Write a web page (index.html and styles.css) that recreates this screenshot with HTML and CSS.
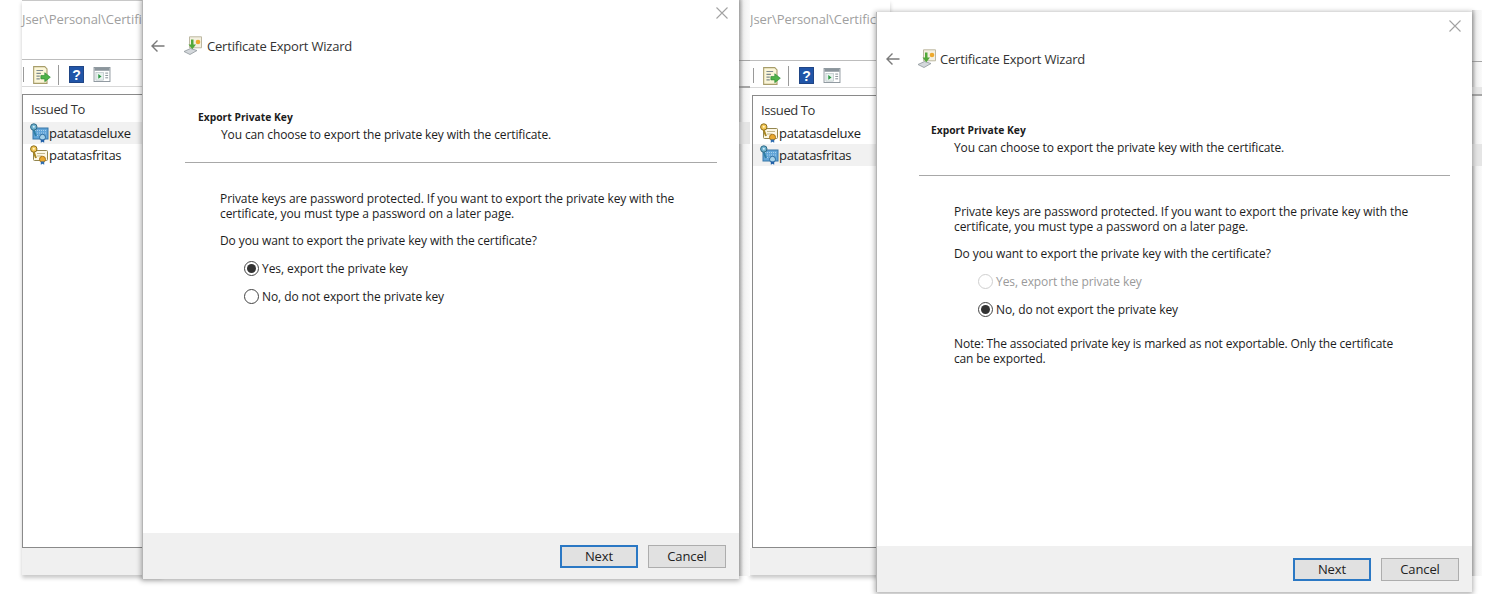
FILE: index.html
```html
<!DOCTYPE html>
<html lang="en">
<head>
<meta charset="utf-8">
<title>Certificate Export Wizard</title>
<link rel="stylesheet" href="styles.css">
</head>
<body>
<svg class="defs" width="0" height="0" aria-hidden="true">
  <defs>
    <symbol id="cert-gold" viewBox="0 0 20 20">
      <rect x="4.500" y="5.500" width="14" height="10" rx="1" fill="#fdf8e6" stroke="#93864f"/>
      <path d="M8 8.500h8M8 11h5" stroke="#c4b98c" stroke-width="1"/>
      <path d="M4.500 6.500l2.500 6.500" stroke="#a98620" stroke-width="2"/>
      <circle cx="4.800" cy="4" r="3.200" fill="#f3c755" stroke="#8a6d1e"/>
      <circle cx="4.800" cy="3.700" r="1" fill="#fff6d0"/>
      <circle cx="13.500" cy="14.300" r="3" fill="#eaa92f" stroke="#a9761a"/>
      <path d="M11.800 16.500v3.300l1.700-1.100 1.700 1.100v-3.300" fill="#2f6db0"/>
    </symbol>
    <symbol id="cert-blue" viewBox="0 0 20 20">
      <rect x="4" y="5" width="15" height="11" fill="#62a5d8" stroke="#3677a8"/>
      <path d="M6 7.500h11M6 10h11M6 12.500h7" stroke="#a9d2ec" stroke-width="1.200" stroke-dasharray="1 1"/>
      <path d="M4.500 6.500l2.500 6.500" stroke="#2f7fa6" stroke-width="2"/>
      <circle cx="4.800" cy="4" r="3.200" fill="#6fb2cf" stroke="#2f6a86"/>
      <circle cx="4.800" cy="3.700" r="1" fill="#d5edf7"/>
      <circle cx="13.500" cy="14.300" r="3" fill="#a5d2ea" stroke="#2c6a9c"/>
      <path d="M11.800 16.500v3.300l1.700-1.100 1.700 1.100v-3.300" fill="#1f5fa8"/>
    </symbol>
    <symbol id="wizard" viewBox="0 0 20 20">
      <path d="M6.500 .8h12v11h-12z" fill="#f4f0e0" stroke="#bdb8a2"/>
      <circle cx="15" cy="6" r="2.300" fill="#eea92c"/>
      <path d="M1 15.500l6.500-3 6.500 2-7 4z" fill="#d4d8dc" stroke="#8e959b" stroke-width=".8"/>
      <path d="M8 3.500v5H5.500l3.800 4.800L13 8.500H10.500v-5z" fill="#52a83a"/>
    </symbol>
    <symbol id="export" viewBox="0 0 18 18">
      <path d="M1.500 1.500h10l2 2v13h-12z" fill="#fbf6d8" stroke="#a79d6a"/>
      <path d="M4 5h6M4 7.500h4M4 10h3M4 12.500h3" stroke="#7d8a8f"/>
      <path d="M8 9.500h3.500V7l5 4-5 4v-2.500H8z" fill="#4fb348" stroke="#2f8b34" stroke-width=".6"/>
    </symbol>
    <symbol id="help" viewBox="0 0 16 18">
      <rect x=".5" y=".5" width="15" height="17" fill="#2155a8" stroke="#193f80"/>
      <text x="8" y="14.500" text-anchor="middle" class="help-mark">?</text>
    </symbol>
    <symbol id="panel" viewBox="0 0 18 16">
      <rect x=".5" y=".5" width="17" height="15" fill="#fff" stroke="#8b959c"/>
      <rect x="1" y="1" width="16" height="3" fill="#8b959c"/>
      <rect x="2.500" y="6" width="8" height="8" fill="#e8f1ee" stroke="#a6b3b8" stroke-width=".6"/>
      <path d="M5 7.500l3.500 2.500-3.500 2.500z" fill="#2f9a46"/>
      <path d="M12.500 6.500h3M12.500 9h3M12.500 11.500h3" stroke="#7f8a90"/>
    </symbol>
    <symbol id="back" viewBox="0 0 16 14">
      <path d="M14.500 7H2M7.500 1.500L2 7l5.500 5.500" fill="none" stroke="#7a7a7a" stroke-width="1.400"/>
    </symbol>
    <symbol id="close" viewBox="0 0 14 14">
      <path d="M1.500 1.500l11 11M12.500 1.500l-11 11" stroke="#a2a2a2" stroke-width="1.100"/>
    </symbol>
  </defs>
</svg>

<main class="stage">

  <section class="manager manager-left">
    <p class="path">Jser\Personal\Certific</p>
    <div class="toolbar">
      <span class="tool-sep-stub"></span>
      <svg class="tool-export"><use href="#export"/></svg>
      <span class="tool-sep"></span>
      <svg class="tool-help"><use href="#help"/></svg>
      <svg class="tool-panel"><use href="#panel"/></svg>
    </div>
    <div class="listbox">
      <div class="list-head">Issued To</div>
      <div class="row row-selected"><svg class="cert"><use href="#cert-blue"/></svg><span>patatasdeluxe</span></div>
      <div class="row"><svg class="cert"><use href="#cert-gold"/></svg><span>patatasfritas</span></div>
    </div>
    <div class="statusbar"></div>
  </section>

  <section class="manager manager-right">
    <p class="path">Jser\Personal\Certific</p>
    <div class="toolbar">
      <span class="tool-sep-stub"></span>
      <svg class="tool-export"><use href="#export"/></svg>
      <span class="tool-sep"></span>
      <svg class="tool-help"><use href="#help"/></svg>
      <svg class="tool-panel"><use href="#panel"/></svg>
    </div>
    <div class="listbox">
      <div class="list-head">Issued To</div>
      <div class="row"><svg class="cert"><use href="#cert-gold"/></svg><span>patatasdeluxe</span></div>
      <div class="row row-selected"><svg class="cert"><use href="#cert-blue"/></svg><span>patatasfritas</span></div>
    </div>
    <div class="statusbar"></div>
  </section>

  <section class="strip strip-middle">
    <div class="strip-line strip-line-a"></div>
    <div class="strip-line strip-line-b"></div>
    <div class="strip-sel"></div>
  </section>

  <section class="strip strip-right">
    <div class="strip-line strip-line-a"></div>
    <div class="strip-band"></div>
    <div class="strip-line strip-line-b"></div>
    <div class="strip-sel"></div>
  </section>

  <section class="wizard wizard-left">
    <svg class="close"><use href="#close"/></svg>
    <div class="content">
      <header class="title-row">
        <svg class="back"><use href="#back"/></svg>
        <svg class="wiz-icon"><use href="#wizard"/></svg>
        <h1 class="title">Certificate Export Wizard</h1>
      </header>
      <div class="page-head">
        <h2 class="head-title">Export Private Key</h2>
        <p class="head-sub">You can choose to export the private key with the certificate.</p>
      </div>
      <hr class="rule">
      <div class="body">
        <p class="para">Private keys are password protected. If you want to export the private key with the<br>certificate, you must type a password on a later page.</p>
        <p class="question">Do you want to export the private key with the certificate?</p>
        <div class="radios">
          <div class="radio-row"><span class="radio radio-on"></span><span>Yes, export the private key</span></div>
          <div class="radio-row"><span class="radio"></span><span>No, do not export the private key</span></div>
        </div>
      </div>
    </div>
    <footer class="footer">
      <button class="btn btn-default" type="button">Next</button>
      <button class="btn" type="button">Cancel</button>
    </footer>
  </section>

  <section class="wizard wizard-right">
    <svg class="close"><use href="#close"/></svg>
    <div class="content">
      <header class="title-row">
        <svg class="back"><use href="#back"/></svg>
        <svg class="wiz-icon"><use href="#wizard"/></svg>
        <h1 class="title">Certificate Export Wizard</h1>
      </header>
      <div class="page-head">
        <h2 class="head-title">Export Private Key</h2>
        <p class="head-sub">You can choose to export the private key with the certificate.</p>
      </div>
      <hr class="rule">
      <div class="body">
        <p class="para">Private keys are password protected. If you want to export the private key with the<br>certificate, you must type a password on a later page.</p>
        <p class="question">Do you want to export the private key with the certificate?</p>
        <div class="radios">
          <div class="radio-row radio-row-off"><span class="radio radio-off"></span><span>Yes, export the private key</span></div>
          <div class="radio-row"><span class="radio radio-on"></span><span>No, do not export the private key</span></div>
        </div>
        <p class="note">Note: The associated private key is marked as not exportable. Only the certificate<br>can be exported.</p>
      </div>
    </div>
    <footer class="footer">
      <button class="btn btn-default" type="button">Next</button>
      <button class="btn" type="button">Cancel</button>
    </footer>
  </section>

</main>
</body>
</html>
```

FILE: styles.css
```css
* { box-sizing: border-box; }

html, body {
  margin: 0;
  padding: 0;
  background: #fff;
}

.defs { position: absolute; }

.stage {
  position: relative;
  width: 1500px;
  height: 594px;
  overflow: hidden;
  font-family: "Open Sans", "Noto Sans", sans-serif;
  font-size: 12px;
  color: #1c1c1c;
  background: #fff;
}

.help-mark {
  font-family: "Liberation Sans", sans-serif;
  font-weight: 700;
  font-size: 15px;
  fill: #fff;
}

/* background certificate manager windows */
.manager {
  position: absolute;
  top: 0;
  height: 575px;
  width: 140px;
  display: flex;
  flex-direction: column;
  box-shadow: 0 3px 4px rgba(0, 0, 0, .22);
  background: #fff;
}

.manager-left { left: 22px; border-top: 1px solid #c8c8c8; }
.manager-right { left: 750px; width: 140px; }

.path {
  margin: 0;
  height: 59px;
  padding-top: 9px;
  font-size: 13px;
  line-height: 18px;
  color: #a0a0a0;
  white-space: nowrap;
  letter-spacing: -.07px;
  border-bottom: 1px solid #bdbdbd;
}

.manager-right .path { height: 61px; padding-top: 10px; }

.toolbar {
  height: 27px;
  flex: none;
  display: flex;
  align-items: center;
  padding-top: 3px;
  border-bottom: 1px solid #d9d9d9;
}

.manager-right .toolbar { padding-left: 2px; }

.tool-sep-stub {
  width: 2px;
  height: 15px;
  border-right: 1px solid #9a9a9a;
  margin-right: 8px;
}

.tool-export { width: 20px; height: 20px; margin-right: 6px; }
.tool-sep { width: 1px; height: 20px; background: #9a9a9a; margin-right: 10px; }
.tool-help { width: 15px; height: 19px; margin-right: 9px; }
.tool-panel { width: 18px; height: 15px; }

.listbox {
  margin-top: 7px;
  flex: 1;
  min-height: 0;
  border: 1px solid #8a8a8a;
  border-right: 0;
  background: #fff;
}

.manager-right .listbox { margin-left: 2px; }

.list-head {
  height: 27px;
  padding: 5px 0 0 8px;
  font-size: 13px;
  line-height: 18px;
  letter-spacing: -.4px;
  color: #333;
}

.manager-right .list-head { height: 26px; }

.row {
  height: 22px;
  display: flex;
  align-items: center;
  padding-left: 6px;
  font-size: 13px;
  letter-spacing: -.3px;
}

.row span {
  padding-right: 20px;
}

.row-selected { background: #f1f1f1; }

.cert { width: 20px; height: 20px; flex: none; }

.statusbar {
  height: 27px;
  flex: none;
  background: #f0f0f0;
}

/* slivers of manager windows showing beside the wizards */
.strip {
  position: absolute;
  background: linear-gradient(90deg, #c9c9c9, #f1f1f1 40%, #fafafa);
}

.strip-middle { left: 739px; top: 0; width: 11px; height: 576px; }
.strip-right { left: 1472px; top: 10px; width: 10px; height: 566px; }

.strip-line {
  position: absolute;
  left: 0;
  right: 0;
  height: 1px;
  background: #a5a5a5;
}

.strip-line-a { top: 60px; }
.strip-line-b { top: 86px; height: 2px; }
.strip-right .strip-line-a { top: 51px; }
.strip-right .strip-line-b { top: 84px; }

.strip-band {
  position: absolute;
  left: 0;
  right: 0;
  top: 77px;
  height: 7px;
  background: #e6e6e6;
}

.strip-sel {
  position: absolute;
  left: 0;
  right: 0;
  top: 122px;
  height: 22px;
  background: #e5e5e5;
}

.strip-right .strip-sel { top: 134px; }

/* wizard dialog */
.wizard {
  position: absolute;
  width: 597px;
  height: 580px;
  display: flex;
  flex-direction: column;
  background: #fff;
  border-left: 1px solid #b5b5b5;
  box-shadow: 0 1px 5px 1px rgba(0, 0, 0, .32);
}

.wizard-left { left: 142px; top: -1px; }
.wizard-right { left: 876px; top: 12px; width: 596px; }

.close {
  position: absolute;
  right: 10px;
  top: 7px;
  width: 14px;
  height: 14px;
}

.content {
  flex: 1;
  min-height: 0;
  padding: 37px 22px 0 42px;
}

.wizard-right .content { padding-right: 22px; }

.title-row {
  position: relative;
  display: flex;
  align-items: center;
  height: 20px;
}

.back {
  position: absolute;
  left: -35px;
  top: 3px;
  width: 16px;
  height: 14px;
}

.wizard-right .back { left: -34px; }

.wiz-icon {
  width: 20px;
  height: 20px;
  margin-left: -2px;
  margin-right: 4px;
}

.title {
  margin: 0;
  font-size: 13px;
  font-weight: 400;
  letter-spacing: -.2px;
  color: #333;
}

.wizard-right .title { margin-left: -1px; }

.page-head {
  margin-top: 54px;
  padding-left: 13px;
}

.wizard-right .page-head { margin-left: -1px; }

.head-title {
  margin: 0;
  font-size: 10.300px;
  line-height: 14px;
  font-weight: 700;
}

.head-sub {
  margin: 3px 0 0 23px;
  line-height: 16px;
  letter-spacing: -.12px;
}

.rule {
  margin: 19px 0 0;
  border: 0;
  border-top: 1px solid #a8a8a8;
}

.body {
  padding: 28px 0 0 35px;
  letter-spacing: -.07px;
}

.para {
  margin: 0;
  line-height: 15px;
}

.question {
  margin: 12px 0 0;
  line-height: 16px;
  letter-spacing: -.1px;
}

.radios {
  margin-top: 5px;
  margin-left: 24px;
  letter-spacing: -.08px;
}

.radio-row {
  height: 28px;
  display: flex;
  align-items: center;
  gap: 3px;
}

.radio-row-off { color: #9a9a9a; }

.radio {
  position: relative;
  width: 15px;
  height: 15px;
  flex: none;
  border-radius: 50%;
  border: 1.500px solid #444;
  background: #fff;
}

.radio-on::after {
  content: "";
  position: absolute;
  inset: 2px;
  border-radius: 50%;
  background: #333;
}

.radio-off { border-color: #cfcfcf; }

.note {
  margin: 13px 0 0;
  line-height: 15px;
  letter-spacing: -.155px;
}

.footer {
  height: 46px;
  flex: none;
  display: flex;
  justify-content: flex-end;
  align-items: center;
  gap: 10px;
  padding: 0 13px 0 0;
  background: #f0f0f0;
}

.btn {
  width: 78px;
  height: 23px;
  padding: 0;
  font: inherit;
  font-size: 13px;
  letter-spacing: -.1px;
  color: #222;
  background: #e1e1e1;
  border: 1px solid #adadad;
}

.btn-default {
  border: 2px solid #2b78c4;
}
```
